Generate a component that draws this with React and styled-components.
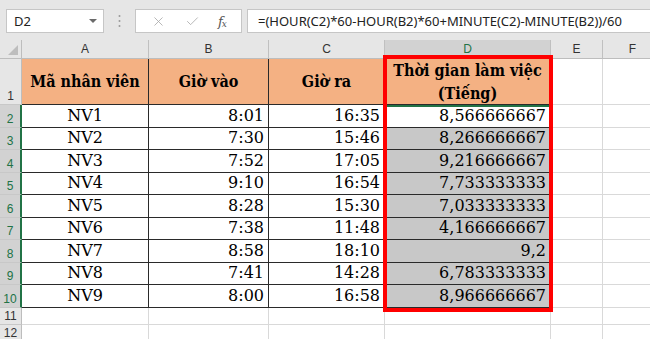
import { Fragment } from "react";
import styled, { createGlobalStyle } from "styled-components";
import { X, Check } from "lucide-react";

const GlobalStyle = createGlobalStyle`
  html, body {
    margin: 0;
    padding: 0;
    background: #ffffff;
    overflow: hidden;
  }
  body {
    width: 650px;
    height: 339px;
    font-family: "Noto Sans", "Open Sans", sans-serif;
  }
`;

const Page = styled.div`
  width: 650px;
  height: 339px;
  overflow: hidden;
  display: flex;
  flex-direction: column;
`;

const Toolbar = styled.div`
  height: 40px;
  flex: none;
  display: flex;
  align-items: flex-start;
  padding-top: 9px;
  padding-left: 6px;
  box-sizing: border-box;
  background: #e6e6e6;
`;

const Box = styled.div`
  height: 24px;
  box-sizing: border-box;
  background: #ffffff;
  border: 1px solid #c6c6c6;
  display: flex;
  align-items: center;
`;

const NameBox = styled(Box)`
  width: 98px;
  padding: 0 6px 0 7px;
  justify-content: space-between;
  font-size: 13px;
  color: #222;
`;

const Caret = styled.span`
  width: 0;
  height: 0;
  border-left: 4px solid transparent;
  border-right: 4px solid transparent;
  border-top: 4px solid #6a6a6a;
`;

const Grip = styled.div`
  width: 31px;
  height: 24px;
  display: flex;
  align-items: center;
  justify-content: center;
`;

const IconBox = styled(Box)`
  width: 107px;
  justify-content: space-around;
  padding: 0 6px;
  color: #a8a8a8;
`;

const Fx = styled.span`
  font-family: "DejaVu Serif", serif;
  font-style: italic;
  font-size: 13px;
  color: #555;
  letter-spacing: -1px;
  sub {
    font-size: 9px;
    vertical-align: -1px;
  }
`;

const FormulaBox = styled(Box)`
  flex: 1;
  margin-left: 5px;
  border-right: none;
  padding-left: 10px;
  font-size: 13px;
  color: #222;
  white-space: nowrap;
`;

const SheetWrap = styled.div`
  position: relative;
  flex: 1;
`;

const Sheet = styled.div`
  display: grid;
  grid-template-columns: 22px 127px 120px 116px 166px 52px 60px;
  grid-template-rows: 19px 46px repeat(9, 22.5px) 17px 17px;
`;

const Corner = styled.div`
  background: #e6e6e6;
  border-right: 1px solid #bdbdbd;
  border-bottom: 1px solid #bdbdbd;
  box-sizing: border-box;
  position: relative;
  &::after {
    content: "";
    position: absolute;
    right: 3px;
    bottom: 3px;
    border-left: 10px solid transparent;
    border-bottom: 10px solid #bdbdbd;
  }
`;

const ColHead = styled.div`
  box-sizing: border-box;
  background: ${(p) => (p.$active ? "#d2d2d2" : "#e6e6e6")};
  border-right: 1px solid #c0c0c0;
  border-bottom: ${(p) => (p.$active ? "2px solid #217346" : "1px solid #bdbdbd")};
  display: flex;
  align-items: center;
  justify-content: center;
  font-family: "Liberation Sans", sans-serif;
  font-size: 12px;
  color: ${(p) => (p.$active ? "#217346" : "#333")};
`;

const RowHead = styled.div`
  box-sizing: border-box;
  background: ${(p) => (p.$active ? "#d2d2d2" : "#e6e6e6")};
  border-bottom: 1px solid #c8c8c8;
  border-right: ${(p) => (p.$active ? "2px solid #217346" : "1px solid #bdbdbd")};
  display: flex;
  align-items: flex-end;
  justify-content: center;
  padding-bottom: 1px;
  font-family: "Liberation Sans", sans-serif;
  font-size: 12px;
  color: ${(p) => (p.$active ? "#217346" : "#333")};
`;

const Cell = styled.div`
  box-sizing: border-box;
  background: ${(p) => p.$bg || "#ffffff"};
  border-right: 1px solid ${(p) => (p.$dark ? "#2a2a2a" : "#d9d9d9")};
  border-bottom: 1px solid ${(p) => (p.$dark ? "#2a2a2a" : "#d9d9d9")};
  border-top: ${(p) => (p.$top ? `2px solid ${p.$top}` : "none")};
  display: flex;
  align-items: flex-end;
  justify-content: ${(p) => p.$align || "flex-start"};
  padding: 0 4px 1px;
  font-family: "DejaVu Serif", serif;
  font-size: 16px;
  line-height: 20px;
  color: #000;
  white-space: nowrap;
  overflow: hidden;
`;

const HeadCell = styled(Cell)`
  align-items: center;
  justify-content: center;
  text-align: center;
  white-space: normal;
  font-family: "DejaVu Serif Condensed", "DejaVu Serif", serif;
  font-weight: bold;
  font-size: 16px;
  line-height: 23px;
  padding: 0 2px;
`;

const Highlight = styled.div`
  position: absolute;
  left: 383px;
  top: 15px;
  width: 170px;
  height: 257px;
  box-sizing: border-box;
  border: 4px solid #ff0000;
  pointer-events: none;
`;

const columns = ["A", "B", "C", "D", "E", "F"];

const rows = [
  ["NV1", "8:01", "16:35", "8,566666667"],
  ["NV2", "7:30", "15:46", "8,266666667"],
  ["NV3", "7:52", "17:05", "9,216666667"],
  ["NV4", "9:10", "16:54", "7,733333333"],
  ["NV5", "8:28", "15:30", "7,033333333"],
  ["NV6", "7:38", "11:48", "4,166666667"],
  ["NV7", "8:58", "18:10", "9,2"],
  ["NV8", "7:41", "14:28", "6,783333333"],
  ["NV9", "8:00", "16:58", "8,966666667"],
];

const headers = ["Mã nhân viên", "Giờ vào", "Giờ ra", "Thời gian làm việc (Tiếng)"];

export default function App() {
  return (
    <Page>
      <GlobalStyle />
      <Toolbar>
        <NameBox>
          <span>D2</span>
          <Caret />
        </NameBox>
        <Grip>
          <svg width="3" height="14" viewBox="0 0 3 14">
            <circle cx="1.5" cy="2" r="1" fill="#9a9a9a" />
            <circle cx="1.5" cy="7" r="1" fill="#9a9a9a" />
            <circle cx="1.5" cy="12" r="1" fill="#9a9a9a" />
          </svg>
        </Grip>
        <IconBox>
          <X size={15} strokeWidth={1.3} />
          <Check size={15} strokeWidth={1.3} />
          <Fx>
            f<sub>x</sub>
          </Fx>
        </IconBox>
        <FormulaBox>=(HOUR(C2)*60-HOUR(B2)*60+MINUTE(C2)-MINUTE(B2))/60</FormulaBox>
      </Toolbar>
      <SheetWrap>
        <Sheet>
          <Corner />
          {columns.map((c) => (
            <ColHead key={c} $active={c === "D"}>
              {c}
            </ColHead>
          ))}

          <RowHead>1</RowHead>
          {headers.map((h) => (
            <HeadCell key={h} $dark $bg="#f4b183">
              {h}
            </HeadCell>
          ))}
          <Cell />
          <Cell />

          {rows.map((r, i) => (
            <Fragment key={r[0]}>
              <RowHead $active>{i + 2}</RowHead>
              <Cell $dark $align="center">{r[0]}</Cell>
              <Cell $dark $align="flex-end">{r[1]}</Cell>
              <Cell $dark $align="flex-end">{r[2]}</Cell>
              <Cell
                $dark
                $align="flex-end"
                $bg={i === 0 ? "#ffffff" : "#c8c8c8"}
                $top={i === 0 ? "#217346" : null}
              >
                {r[3]}
              </Cell>
              <Cell />
              <Cell />
            </Fragment>
          ))}

          {[11, 12].map((n) => (
            <Fragment key={n}>
              <RowHead>{n}</RowHead>
              {columns.map((c) => (
                <Cell key={c} />
              ))}
            </Fragment>
          ))}
        </Sheet>
        <Highlight />
      </SheetWrap>
    </Page>
  );
}
